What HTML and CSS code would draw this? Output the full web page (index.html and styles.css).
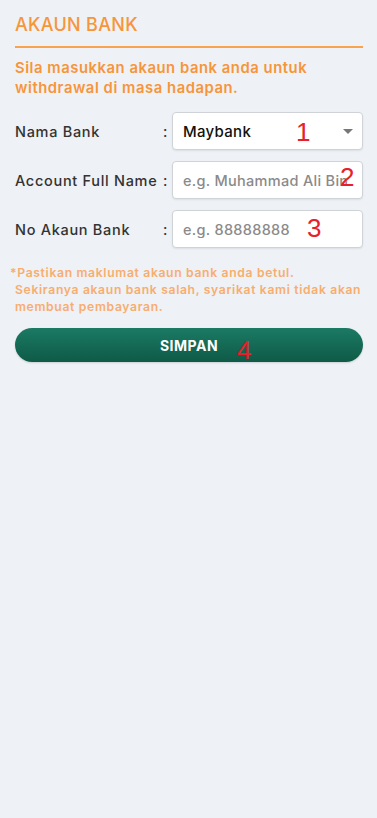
FILE: index.html
```html
<!DOCTYPE html>
<html lang="ms">
<head>
<meta charset="utf-8">
<meta name="viewport" content="width=device-width, initial-scale=1">
<title>Akaun Bank</title>
<link rel="stylesheet" href="styles.css">
</head>
<body>
<main class="page">
  <h1 class="title">AKAUN BANK</h1>
  <div class="rule"></div>
  <p class="intro">Sila masukkan akaun bank anda untuk<br>withdrawal di masa hadapan.</p>

  <form class="form">
    <div class="row">
      <label class="label">Nama Bank</label>
      <span class="colon">:</span>
      <div class="field select">
        <span class="select-value">Maybank</span>
        <span class="caret"></span>
        <span class="mark mark-1">1</span>
      </div>
    </div>
    <div class="row">
      <label class="label">Account Full Name</label>
      <span class="colon">:</span>
      <div class="field">
        <input class="input" type="text" placeholder="e.g. Muhammad Ali Bin Abu">
        <span class="mark mark-2">2</span>
      </div>
    </div>
    <div class="row">
      <label class="label">No Akaun Bank</label>
      <span class="colon">:</span>
      <div class="field">
        <input class="input" type="text" placeholder="e.g. 88888888">
        <span class="mark mark-3">3</span>
      </div>
    </div>

    <p class="note">*Pastikan maklumat akaun bank anda betul.<br>Sekiranya akaun bank salah, syarikat kami tidak akan<br>membuat pembayaran.</p>

    <button class="btn" type="button">SIMPAN<span class="mark mark-4">4</span></button>
  </form>
</main>
</body>
</html>
```

FILE: styles.css
```css
html, body {
  margin: 0;
  padding: 0;
}
body {
  background: #eef1f5;
  font-family: "Inter", "Noto Sans", sans-serif;
  min-height: 818px;
}
.page {
  padding: 13px 14px 0 15px;
}
.title {
  margin: 0;
  font-size: 18px;
  line-height: 24px;
  font-weight: 500;
  color: #f7953a;
  letter-spacing: 0.3px;
}
.rule {
  height: 2px;
  background: #f9a34f;
  margin-top: 9px;
}
.intro {
  margin: 10px 0 0;
  font-size: 14.8px;
  line-height: 20px;
  font-weight: 600;
  color: #f7953a;
  letter-spacing: 0.55px;
  white-space: nowrap;
}
.form {
  margin-top: 14px;
  display: flex;
  flex-direction: column;
}
.row {
  display: grid;
  grid-template-columns: 148px 9px 1fr;
  align-items: center;
  margin-bottom: 11px;
}
.label {
  font-size: 14.5px;
  color: #333;
  font-weight: 500;
  letter-spacing: 0.7px;
  white-space: nowrap;
}
.colon {
  font-size: 14.5px;
  color: #333;
  font-weight: 500;
}
.field {
  position: relative;
  height: 38px;
  background: #fff;
  border: 1px solid #cfd3d8;
  border-radius: 4px;
  box-shadow: 0 1px 2px rgba(0,0,0,0.08);
  box-sizing: border-box;
  display: flex;
  align-items: center;
  overflow: hidden;
}
.select {
  padding: 0 9px 0 10px;
  justify-content: space-between;
}
.select-value {
  font-size: 15px;
  color: #111;
  font-weight: 500;
  letter-spacing: 0.3px;
}
.caret {
  width: 0;
  height: 0;
  border-left: 5px solid transparent;
  border-right: 5px solid transparent;
  border-top: 5px solid #777;
}
.input {
  border: none;
  outline: none;
  background: transparent;
  width: 100%;
  height: 100%;
  padding: 0 10px;
  box-sizing: border-box;
  font-family: inherit;
  font-size: 14.5px;
  font-weight: 500;
  letter-spacing: 0.3px;
  color: #333;
}
.input::placeholder {
  color: #8a8a8a;
}
.mark {
  position: absolute;
  font-family: "Liberation Sans", sans-serif;
  font-size: 26px;
  line-height: 26px;
  color: #e8202a;
  font-weight: 400;
}
.mark-1 { left: 123px; top: 6px; }
.mark-2 { left: 167px; top: 2px; }
.mark-3 { left: 134px; top: 4px; }
.mark-4 { left: 222px; top: 9px; }
.note {
  margin: 5px 0 0 -5px;
  padding-left: 5px;
  text-indent: -5px;
  font-size: 12.2px;
  line-height: 17px;
  font-weight: 600;
  color: #f8ad6e;
  letter-spacing: 0.65px;
  white-space: nowrap;
}
.btn {
  position: relative;
  margin-top: 13px;
  height: 34px;
  border: none;
  border-radius: 17px;
  background: linear-gradient(#1b7a64, #0e5a47);
  color: #fff;
  font-family: inherit;
  font-size: 14px;
  font-weight: 700;
  letter-spacing: 0.5px;
  box-shadow: 0 1px 2px rgba(0,0,0,0.15);
}
```
